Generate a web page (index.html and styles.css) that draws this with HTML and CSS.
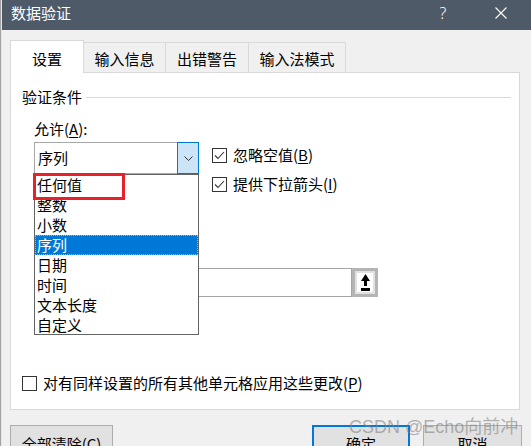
FILE: index.html
```html
<!DOCTYPE html>
<html lang="zh-CN">
<head>
<meta charset="utf-8">
<title>数据验证</title>
<link rel="stylesheet" href="styles.css">
</head>
<body>
<div class="screen">
  <div class="edge"></div>
  <div class="dialog">
    <div class="titlebar">
      <span class="title">数据验证</span>
      <span class="help">?</span>
      <svg class="close" width="12" height="12" viewBox="0 0 12 12"><path d="M0.5 0.5 L11.5 11.5 M11.5 0.5 L0.5 11.5" stroke="#fff" stroke-width="1.1" fill="none"/></svg>
    </div>
    <div class="body">
      <div class="tabs">
        <div class="tab active">设置</div>
        <div class="tab t2">输入信息</div>
        <div class="tab t3">出错警告</div>
        <div class="tab t4">输入法模式</div>
      </div>
      <div class="panel">
        <div class="group-head"><span>验证条件</span><div class="rule"></div></div>
        <div class="fields">
          <div class="field-label">允许(<u>A</u>):</div>
          <div class="allow-row">
            <div class="combo-wrap">
              <div class="combo">
                <span class="combo-text">序列</span>
                <div class="drop-btn"><svg width="9" height="5" viewBox="0 0 9 5"><path d="M0.5 0.5 L4.5 4.5 L8.5 0.5" stroke="#333" stroke-width="1" fill="none"/></svg></div>
              </div>
              <ul class="list">
                <li>任何值</li>
                <li>整数</li>
                <li>小数</li>
                <li class="selected">序列</li>
                <li>日期</li>
                <li>时间</li>
                <li>文本长度</li>
                <li>自定义</li>
              </ul>
              <div class="mark"></div>
            </div>
            <div class="checks">
              <div class="check"><span class="box"><svg width="13" height="13" viewBox="0 0 13 13"><path d="M2 6.5 L5 9.5 L11 3" stroke="#333" stroke-width="1.1" fill="none"/></svg></span>忽略空值(<u>B</u>)</div>
              <div class="check"><span class="box"><svg width="13" height="13" viewBox="0 0 13 13"><path d="M2 6.5 L5 9.5 L11 3" stroke="#333" stroke-width="1.1" fill="none"/></svg></span>提供下拉箭头(<u>I</u>)</div>
            </div>
          </div>
          <div class="field-label source-label">来源(<u>S</u>):</div>
          <div class="source-row">
            <div class="source-input"></div>
            <div class="pick-btn"><div class="pick-inner"><svg width="9" height="17" viewBox="0 0 9 17"><path d="M4.5 0 L9 7 L6 7 L6 12 L3 12 L3 7 L0 7 Z M0 14 H9 V17 H0 Z" fill="#000"/></svg></div></div>
          </div>
        </div>
        <div class="check apply"><span class="box"></span>对有同样设置的所有其他单元格应用这些更改(<u>P</u>)</div>
      </div>
      <div class="buttons">
        <div class="btn clear">全部清除(<u>C</u>)</div>
        <div class="btn ok">确定</div>
        <div class="btn cancel">取消</div>
      </div>
    </div>
  </div>
</div>
<div class="watermark">CSDN @Echo向前冲</div>
</body>
</html>
```

FILE: styles.css
```css
* { box-sizing: border-box; }

body {
  margin: 0;
  width: 531px;
  height: 446px;
  overflow: hidden;
  position: relative;
  background: #f0f0f0;
  font-family: "Noto Sans CJK SC", "Microsoft YaHei", sans-serif;
  font-size: 15px;
  line-height: 20px;
  color: #000;
}

u { text-decoration: underline; text-underline-offset: 2px; }

.screen {
  display: flex;
  height: 446px;
  overflow: hidden;
}

.edge {
  width: 2px;
  flex-shrink: 0;
  border-left: 1px solid #a4a4a4;
  background: #e6e6e6;
}

.dialog {
  flex: 1;
  display: flex;
  flex-direction: column;
  overflow: hidden;
}

.titlebar {
  flex-shrink: 0;
  height: 30px;
  background: #4f5a69;
  color: #fff;
  display: flex;
  align-items: flex-start;
  padding-top: 3px;
}

.title {
  margin-left: 9px;
  line-height: 20px;
}

.help {
  margin-left: auto;
  width: 10px;
  font-family: "Noto Sans", "DejaVu Sans", sans-serif;
  font-weight: 300;
  font-size: 16px;
  line-height: 20px;
  text-align: center;
}

.close {
  margin: 4px 24px 0 47px;
}

.body {
  flex-shrink: 0;
  padding: 10px 11px 0 8px;
}

.tabs {
  display: flex;
  align-items: flex-end;
  height: 32px;
  position: relative;
  z-index: 1;
}

.tab {
  height: 30px;
  padding-top: 6px;
  text-align: center;
  border: 1px solid #d9d9d9;
  border-bottom: none;
  background: #f0f0f0;
  margin-left: -1px;
}

.tab.active {
  width: 74px;
  height: 33px;
  padding-top: 8px;
  margin-left: 0;
  margin-bottom: -1px;
  background: #fff;
}

.tab.t2 { width: 83px; }
.tab.t3 { width: 84px; }
.tab.t4 { width: 98px; }

.panel {
  height: 338px;
  background: #fff;
  border: 1px solid #d9d9d9;
  padding: 14px 8px 0 11px;
}

.group-head {
  display: flex;
  align-items: center;
}

.rule {
  flex: 1;
  height: 1px;
  margin-left: 4px;
  background: #dadada;
}

.fields {
  margin-left: 12px;
}

.field-label {
  margin-top: 12px;
}

.allow-row {
  display: flex;
  align-items: flex-start;
  margin-top: 3px;
}

.combo-wrap {
  position: relative;
  width: 165px;
}

.combo {
  height: 32px;
  display: flex;
  align-items: stretch;
  border: 1px solid #a7a7a7;
  background: #fff;
}

.combo-text {
  flex: 1;
  padding-left: 3px;
  line-height: 30px;
}

.drop-btn {
  width: 22px;
  margin: -1px -1px -1px 0;
  background: #cce4f7;
  border: 1px solid #0078d7;
  display: flex;
  align-items: center;
  justify-content: center;
}

.list {
  position: absolute;
  left: 0;
  top: 32px;
  width: 165px;
  height: 161px;
  margin: 0;
  padding: 0;
  list-style: none;
  background: #fff;
  border: 1px solid #646464;
  z-index: 3;
}

.list li {
  height: 20px;
  padding-left: 2px;
  line-height: 20px;
}

.list li.selected {
  background: #0078d7;
  color: #fff;
  outline: 1px dotted #f5a347;
  outline-offset: -1px;
}

.mark {
  position: absolute;
  left: -1px;
  top: 31px;
  width: 92px;
  height: 27px;
  border: 3px solid #e8202a;
  z-index: 4;
}

.checks {
  margin-left: 13px;
  margin-top: 3px;
  display: flex;
  flex-direction: column;
  gap: 9px;
}

.check {
  display: flex;
  align-items: center;
  height: 20px;
  white-space: nowrap;
}

.box {
  width: 15px;
  height: 15px;
  border: 1px solid #333;
  background: #fff;
  margin-right: 6px;
  display: flex;
  align-items: center;
  justify-content: center;
}

.source-label {
  margin-top: 51px;
}

.source-row {
  display: flex;
  margin-top: 3px;
  height: 29px;
}

.source-input {
  width: 318px;
  border: 1px solid #a5a5a5;
  background: #fff;
}

.pick-btn {
  width: 26px;
  border: 3px solid #b4b4b4;
  background: #e1e1e1;
  padding: 2px;
}

.pick-inner {
  height: 100%;
  background: #fff;
  display: flex;
  align-items: center;
  justify-content: center;
}

.apply {
  margin-top: 76px;
}

.buttons {
  display: flex;
  margin-top: 15px;
  margin-right: -2px;
}

.btn {
  height: 34px;
  padding-top: 8px;
  text-align: center;
  background: #e1e1e1;
  border: 1px solid #adadad;
}

.btn.clear { width: 103px; }

.btn.ok {
  width: 98px;
  margin-left: auto;
  border: 2px solid #0078d7;
  padding-top: 7px;
}

.btn.cancel {
  width: 99px;
  margin-left: 13px;
}

.watermark {
  position: absolute;
  left: 349px;
  top: 417px;
  font-family: "Liberation Sans", "Noto Sans CJK SC", sans-serif;
  font-size: 18px;
  line-height: 20px;
  color: rgba(130, 130, 130, 0.6);
  white-space: nowrap;
  z-index: 5;
}
```
